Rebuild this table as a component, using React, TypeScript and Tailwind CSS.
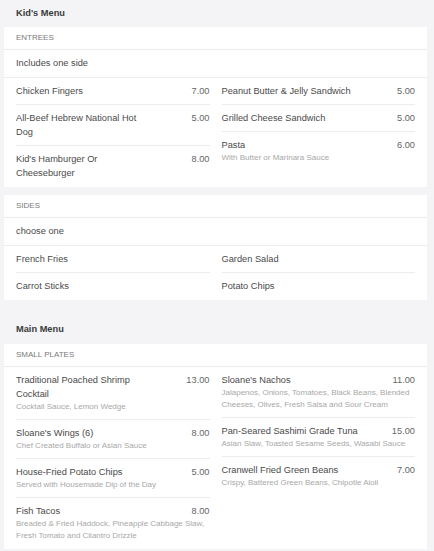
import React from 'react';

type Item = { name: string; price?: string; desc?: string };

const font = { fontFamily: '"Liberation Sans", Arial, Helvetica, sans-serif' };

const Entry: React.FC<{ item: Item; last?: boolean }> = ({ item, last }) => (
  <div className={`pt-[6px] ${last ? 'pb-[7px]' : 'pb-[6px] border-b border-[#ececee]'}`}>
    <div className="flex justify-between items-start">
      <div className="w-[138px] text-[9.25px] leading-[14px] text-[#4a4a4a]">{item.name}</div>
      {item.price && <div className="text-[9.25px] leading-[14px] text-[#666]">{item.price}</div>}
    </div>
    {item.desc && <div className="text-[8px] leading-[12px] text-[#a8a8a8]">{item.desc}</div>}
  </div>
);

const Column: React.FC<{ items: Item[] }> = ({ items }) => (
  <div className="flex flex-col">
    {items.map((it, i) => (
      <Entry key={it.name} item={it} last={i === items.length - 1} />
    ))}
  </div>
);

const Label: React.FC<{ text: string }> = ({ text }) => (
  <div className="h-[23px] px-3 flex items-center border-b border-[#ececee] text-[8px] uppercase text-[#7a7a7a]">{text}</div>
);

const Note: React.FC<{ text: string }> = ({ text }) => (
  <div className="h-[28px] px-3 flex items-center border-b border-[#ececee] text-[9.25px] text-[#4a4a4a]">{text}</div>
);

const Heading: React.FC<{ text: string; tall?: boolean }> = ({ text, tall }) => (
  <div className={`${tall ? 'h-[28px]' : 'h-[27px]'} px-3 flex items-center text-[9.25px] font-bold text-[#3a3a3a]`}>
    {text}
  </div>
);

const entreesLeft: Item[] = [
  { name: 'Chicken Fingers', price: '7.00' },
  { name: 'All-Beef Hebrew National Hot Dog', price: '5.00' },
  { name: "Kid's Hamburger Or Cheeseburger", price: '8.00' },
];
const entreesRight: Item[] = [
  { name: 'Peanut Butter & Jelly Sandwich', price: '5.00' },
  { name: 'Grilled Cheese Sandwich', price: '5.00' },
  { name: 'Pasta', price: '6.00', desc: 'With Butter or Marinara Sauce' },
];
const platesLeft: Item[] = [
  { name: 'Traditional Poached Shrimp Cocktail', price: '13.00', desc: 'Cocktail Sauce, Lemon Wedge' },
  { name: "Sloane's Wings (6)", price: '8.00', desc: 'Chef Created Buffalo or Asian Sauce' },
  { name: 'House-Fried Potato Chips', price: '5.00', desc: 'Served with Housemade Dip of the Day' },
  {
    name: 'Fish Tacos',
    price: '8.00',
    desc: 'Breaded & Fried Haddock, Pineapple Cabbage Slaw, Fresh Tomato and Cilantro Drizzle',
  },
];
const platesRight: Item[] = [
  {
    name: "Sloane's Nachos",
    price: '11.00',
    desc: 'Jalapenos, Onions, Tomatoes, Black Beans, Blended Cheeses, Olives, Fresh Salsa and Sour Cream',
  },
  { name: 'Pan-Seared Sashimi Grade Tuna', price: '15.00', desc: 'Asian Slaw, Toasted Sesame Seeds, Wasabi Sauce' },
  { name: 'Cranwell Fried Green Beans', price: '7.00', desc: 'Crispy, Battered Green Beans, Chipotle Aioli' },
];

export default function App() {
  return (
    <div className="w-[434px] h-[551px] overflow-hidden bg-[#f4f4f7] pl-[4px] pr-[7px]" style={font}>
      <Heading text="Kid's Menu" />
      <div className="bg-white">
        <Label text="Entrees" />
        <Note text="Includes one side" />
        <div className="grid grid-cols-2 gap-3 px-3">
          <Column items={entreesLeft} />
          <Column items={entreesRight} />
        </div>
      </div>

      <div className="bg-white mt-[8px]">
        <Label text="Sides" />
        <Note text="choose one" />
        <div className="grid grid-cols-2 gap-3 px-3">
          <Column items={[{ name: 'French Fries' }, { name: 'Carrot Sticks' }]} />
          <Column items={[{ name: 'Garden Salad' }, { name: 'Potato Chips' }]} />
        </div>
      </div>

      <div className="mt-[16px]">
        <Heading text="Main Menu" tall />
      </div>
      <div className="bg-white">
        <Label text="Small Plates" />
        <div className="grid grid-cols-2 gap-3 px-3">
          <Column items={platesLeft} />
          <Column items={platesRight} />
        </div>
      </div>
    </div>
  );
}
